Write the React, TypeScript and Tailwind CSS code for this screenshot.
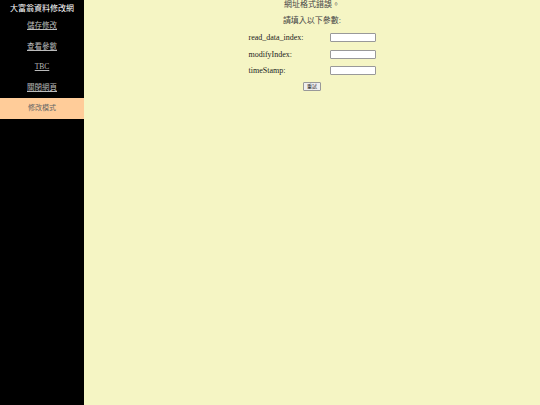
import React from 'react';

const links = ['儲存修改', '查看參數', 'TBC', '關閉網頁'];

const fields = ['read_data_index:', 'modifyIndex:', 'timeStamp:'];

const App = () => {
  return (
    <div className="flex h-[405px] w-[540px] bg-[#f5f5c4] font-['Liberation_Serif','Noto_Sans_CJK_TC',serif] text-[8px] text-[#222]">
      {/* Sidebar */}
      <div className="flex w-[84px] shrink-0 flex-col bg-black">
        <div className="pt-[4px] text-center text-[8px] leading-[10px] text-white">大富翁資料修改網</div>
        <div className="mt-[7px] flex flex-col">
          {links.map((link) => (
            <a
              key={link}
              href="#"
              className="h-[20.5px] text-center font-['Liberation_Serif','Noto_Sans_CJK_TC',serif] text-[7.5px] leading-[10px] text-[#bbb] underline"
            >
              {link}
            </a>
          ))}
        </div>
        <div className="mt-[-5px] flex h-[21px] items-center justify-center bg-[#ffcc99] text-[7px] text-[#666]">修改模式</div>
      </div>

      {/* Main */}
      <div className="flex flex-1 flex-col items-center">
        <p className="mt-[0px] leading-[10px] text-[#444]">網址格式錯誤。</p>
        <p className="mt-[6px] leading-[10px] text-[#444]">請填入以下參數:</p>
        <div className="mt-[7px] grid grid-cols-[81px_46px] gap-y-[7.5px]">
          {fields.map((f) => (
            <React.Fragment key={f}>
              <span className="leading-[9px]">{f}</span>
              <input className="h-[9px] w-[46px] rounded-[1px] border border-[#999] bg-white" />
            </React.Fragment>
          ))}
        </div>
        <button className="mt-[7px] h-[9px] w-[18px] rounded-[1px] border border-[#999] bg-[#eee] text-[5px] leading-[7px] text-[#333]">
          重試
        </button>
      </div>
    </div>
  );
};

export default App;
